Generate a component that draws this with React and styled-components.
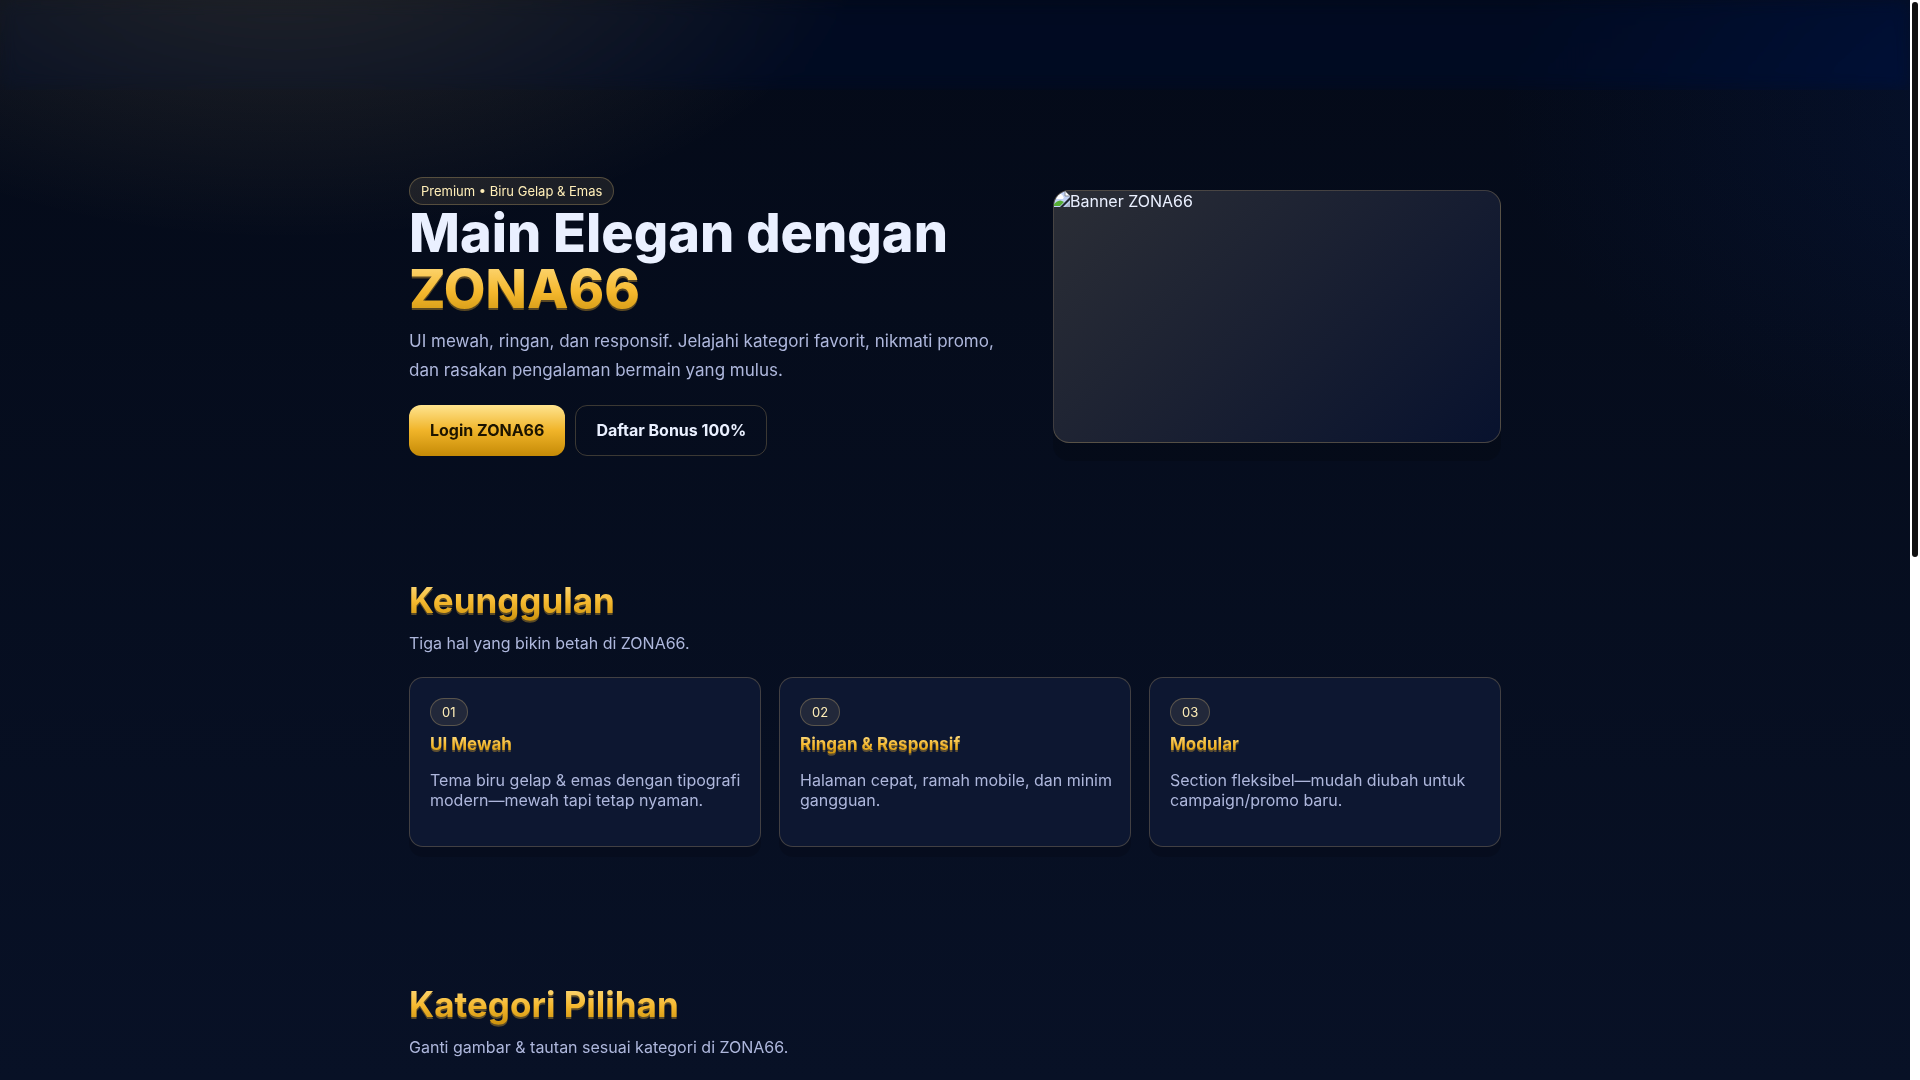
import React from 'react'
import styled, {createGlobalStyle, css} from 'styled-components'

const GlobalStyle = createGlobalStyle`
    * {
        box-sizing: border-box;
    }
    body {
        margin: 0;
        background: #081022;
        color: #eaf0ff;
        font-family: Inter, 'Liberation Sans', sans-serif;
        font-size: 16px;
    }
`

const goldText = css`
    background: linear-gradient(180deg, #ffe08a 0%, #f5b82e 55%, #c9900c 100%);
    -webkit-background-clip: text;
    background-clip: text;
    color: transparent;
    filter: drop-shadow(0 2px 0 rgba(245, 184, 46, 0.35));
`

const Window = styled.div`
    display: flex;
    height: 100vh;
    overflow: hidden;
`
const Page = styled.div`
    flex: 1;
    min-width: 0;
    overflow: hidden;
    background:
        radial-gradient(1000px 600px at 110% 10%, rgba(10, 40, 110, 0.25), transparent 60%),
        radial-gradient(1000px 580px at 15% -10%, rgba(255, 220, 145, 0.15), transparent 60%),
        linear-gradient(180deg, #040a18 0%, #081126 100%);
`
const ScrollTrack = styled.div`
    width: 10px;
    padding: 2px;
    background: #fff;
`
const ScrollThumb = styled.div`
    height: 555px;
    border-radius: 3px;
    background: #101010;
`
const Header = styled.header`
    height: 90px;
    backdrop-filter: blur(8px) saturate(160%);
`
const Container = styled.div`
    max-width: 1140px;
    margin: 0 auto;
    padding: 0 24px;
`
const Hero = styled.section`
    padding: 87px 0 55px;
`
const HeroGrid = styled.div`
    display: grid;
    grid-template-columns: 1.1fr 0.8fr;
    gap: 28px;
    align-items: center;
`
const Pill = styled.span`
    display: inline-block;
    padding: 5px 11px;
    border: 1px solid rgba(255, 215, 130, 0.25);
    border-radius: 999px;
    background: rgba(255, 224, 150, 0.09);
    color: #ffeeb8;
    font-size: 13px;
    line-height: 16px;
`
const HeroTitle = styled.h1`
    margin: 0 0 10px;
    font-size: 54px;
    font-weight: 800;
    line-height: 56px;
`
const Gold = styled.span`
    ${goldText}
`
const Lead = styled.p`
    margin: 0 0 20px;
    color: #aeb7dc;
    font-size: 17px;
    line-height: 29px;
`
const Actions = styled.div`
    display: flex;
    gap: 10px;
`
const Button = styled.a`
    padding: 15px 20px;
    border: 1px solid ${p => p.$primary ? 'transparent' : 'rgba(255, 215, 130, 0.22)'};
    border-radius: 12px;
    background: ${p => p.$primary ? 'linear-gradient(180deg, #ffe48f, #f0b429 50%, #c58a06) border-box' : 'transparent'};
    color: ${p => p.$primary ? '#1c1400' : '#eaf0ff'};
    font-weight: 700;
    line-height: 19px;
    text-decoration: none;
`
const Banner = styled.div`
    display: flex;
    align-items: flex-start;
    box-sizing: content-box;
    aspect-ratio: 16 / 9;
    overflow: hidden;
    border: 1px solid rgba(255, 215, 130, 0.22);
    border-radius: 16px;
    background: linear-gradient(135deg, #2b2e36, #1a2032 50%, #08122e);
    box-shadow: 0 18px 0 rgba(0, 0, 0, 0.14);
`
const BannerAlt = styled.span`
    line-height: 20px;
`
const Section = styled.section`
    padding: 68px 0;
`
const SectionTitle = styled.h2`
    ${goldText}
    margin: 0 0 12px;
    font-size: 35px;
    line-height: 42px;
`
const SectionNote = styled.p`
    margin: 0 0 24px;
    color: #aeb7dc;
    line-height: 20px;
`
const Cards = styled.div`
    display: grid;
    grid-template-columns: repeat(3, 1fr);
    gap: 18px;
`
const Card = styled.article`
    padding: 20px 16px 20px 20px;
    border: 1px solid rgba(255, 215, 130, 0.22);
    border-radius: 14px;
    background: #0d1731;
    box-shadow: 0 10px 0 rgba(0, 0, 0, 0.14);
`
const CardTitle = styled.h3`
    ${goldText}
    margin: 8px 0 16px;
    font-size: 17px;
    line-height: 20px;
`
const CardText = styled.p`
    margin: 0 0 16px;
    color: #aeb7dc;
    line-height: 20px;
`

const features = [
    {no: '01', title: 'UI Mewah', text: 'Tema biru gelap & emas dengan tipografi modern—mewah tapi tetap nyaman.'},
    {no: '02', title: 'Ringan & Responsif', text: 'Halaman cepat, ramah mobile, dan minim gangguan.'},
    {no: '03', title: 'Modular', text: 'Section fleksibel—mudah diubah untuk campaign/promo baru.'},
]

function BrokenImage() {
    return (
        <svg width="16" height="16" viewBox="0 0 16 16" aria-hidden="true">
            <path d="M0 0h11l5 5v11H0z" fill="#c3d3f6"/>
            <path d="M11 0v5h5z" fill="#fff" stroke="#8a8f99"/>
            <path d="M2 7a2 2 0 0 1 2-3a3 3 0 0 1 5 1a2 2 0 0 1 0 3H3z" fill="#fff"/>
            <path d="M0 15V13Q5 7 10 11L6 15z" fill="#55ad34"/>
            <path d="M6 16L16 6V9L9 16z" fill="#1f2530"/>
            <path d="M11 16L16 11V16z" fill="#a9b3c7"/>
        </svg>
    )
}

function App() {
    return (
        <Window>
            <GlobalStyle/>
            <Page>
                <Header/>
                <Container>
                    <Hero>
                        <HeroGrid>
                            <div>
                                <Pill>Premium • Biru Gelap &amp; Emas</Pill>
                                <HeroTitle>Main Elegan dengan <Gold>ZONA66</Gold></HeroTitle>
                                <Lead>
                                    UI mewah, ringan, dan responsif. Jelajahi kategori favorit, nikmati promo, dan
                                    rasakan pengalaman bermain yang mulus.
                                </Lead>
                                <Actions>
                                    <Button $primary href="#login">Login ZONA66</Button>
                                    <Button href="#daftar">Daftar Bonus 100%</Button>
                                </Actions>
                            </div>
                            <Banner>
                                <BrokenImage/>
                                <BannerAlt>Banner ZONA66</BannerAlt>
                            </Banner>
                        </HeroGrid>
                    </Hero>
                    <Section>
                        <SectionTitle>Keunggulan</SectionTitle>
                        <SectionNote>Tiga hal yang bikin betah di ZONA66.</SectionNote>
                        <Cards>
                            {features.map(f => (
                                <Card key={f.no}>
                                    <Pill>{f.no}</Pill>
                                    <CardTitle>{f.title}</CardTitle>
                                    <CardText>{f.text}</CardText>
                                </Card>
                            ))}
                        </Cards>
                    </Section>
                    <Section>
                        <SectionTitle>Kategori Pilihan</SectionTitle>
                        <SectionNote>Ganti gambar &amp; tautan sesuai kategori di ZONA66.</SectionNote>
                    </Section>
                </Container>
            </Page>
            <ScrollTrack>
                <ScrollThumb/>
            </ScrollTrack>
        </Window>
    )
}

export default App
